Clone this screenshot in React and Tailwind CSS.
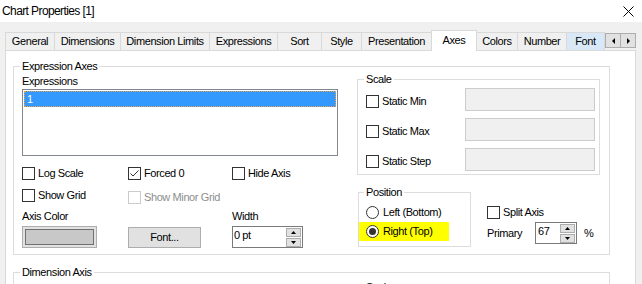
const tabs = [
  { label: 'General', w: 'w-[50px]' },
  { label: 'Dimensions', w: 'w-[67px]' },
  { label: 'Dimension Limits', w: 'w-[90px]' },
  { label: 'Expressions', w: 'w-[69px]' },
  { label: 'Sort', w: 'w-[45px]' },
  { label: 'Style', w: 'w-[41px]' },
  { label: 'Presentation', w: 'w-[71px]' },
  { label: 'Axes', w: 'w-[46px]', active: true },
  { label: 'Colors', w: 'w-[42px]' },
  { label: 'Number', w: 'w-[50px]' },
  { label: 'Font', w: 'w-[39px]', hover: true },
]

function Tab({ tab }) {
  if (tab.active) {
    return (
      <div className={`${tab.w} h-[21px] -mb-px -mr-px relative z-10 bg-white border border-b-0 border-[#d9d9d9] flex justify-center pt-[3px]`}>
        {tab.label}
      </div>
    )
  }
  return (
    <div
      className={`${tab.w} h-[18px] -mr-px border border-b-0 border-[#d9d9d9] flex items-center justify-center ${
        tab.hover ? 'bg-[#d9e8f7]' : 'bg-[#f0f0f0]'
      }`}
    >
      {tab.label}
    </div>
  )
}

function CheckBox({ label, checked = false, disabled = false, className = '' }) {
  return (
    <div className={`flex items-center h-[13px] ${className}`}>
      <span
        className={`w-[13px] h-[13px] shrink-0 bg-white border flex items-center justify-center ${
          disabled ? 'border-[#cccccc]' : 'border-[#333333]'
        }`}
      >
        {checked && (
          <svg width="11" height="11" viewBox="0 0 11 11">
            <path d="M1.5 5.5 L4 8 L9.5 2.5" fill="none" stroke="#333333" strokeWidth="1" />
          </svg>
        )}
      </span>
      <span className={`ml-[3px] whitespace-nowrap ${disabled ? 'text-[#8d8d8d]' : ''}`}>{label}</span>
    </div>
  )
}

function Radio({ label, checked = false }) {
  return (
    <div className="flex items-center">
      <span className="w-[13px] h-[13px] shrink-0 rounded-full border border-[#333333] bg-white flex items-center justify-center">
        {checked && <span className="w-[7px] h-[7px] rounded-full bg-[#333333]" />}
      </span>
      <span className="ml-[4px] whitespace-nowrap">{label}</span>
    </div>
  )
}

function GroupBox({ title, className = '', legendClass = '', children }) {
  return (
    <fieldset className={`border border-[#dcdcdc] min-w-0 ${className}`}>
      <legend className={`px-[2px] leading-[12px] ${legendClass}`}>{title}</legend>
      {children}
    </fieldset>
  )
}

function Arrow({ up }) {
  return (
    <span className="w-[15px] h-[9px] border border-[#adadad] bg-[#e1e1e1] flex items-center justify-center">
      <svg width="5" height="3" viewBox="0 0 5 3">
        <path d={up ? 'M0 3 L2.5 0 L5 3Z' : 'M0 0 L2.5 3 L5 0Z'} fill="#000" />
      </svg>
    </span>
  )
}

function Spin({ value, className = '', textClass = '' }) {
  return (
    <div className={`flex h-[22px] border border-[#7a7a7a] bg-white ${className}`}>
      <span className={`flex-1 pt-[2px] ${textClass}`}>{value}</span>
      <div className="flex flex-col justify-center gap-[1px] pr-[1px]">
        <Arrow up />
        <Arrow />
      </div>
    </div>
  )
}

function ScaleRow({ label }) {
  return (
    <div className="h-[23px] flex items-center justify-between">
      <CheckBox label={label} className="mt-[4px]" />
      <div className="w-[130px] h-[23px] bg-[#f0f0f0] border border-[#cccccc]" />
    </div>
  )
}

export default function App() {
  return (
    <div className="w-[642px] h-[284px] overflow-hidden bg-[#f0f0f0] text-black text-[11px] leading-[13px] tracking-[-0.4px] font-['Liberation_Sans',Arial,sans-serif]">
      {/* title bar */}
      <div className="h-[22px] bg-white flex items-center justify-between pl-[2px] pr-[8px]">
        <span className="text-[12px] leading-[14px] tracking-[-0.6px]">Chart Properties [1]</span>
        <svg width="11" height="11" viewBox="0 0 11 11">
          <path d="M0.5 0.5 L10.5 10.5 M10.5 0.5 L0.5 10.5" stroke="#000" strokeWidth="1" />
        </svg>
      </div>

      {/* tab strip */}
      <div className="mt-[8px] h-[20px] flex items-end pl-[5px] pr-[6px]">
        {tabs.map((t) => (
          <Tab key={t.label} tab={t} />
        ))}
        <div className="ml-auto mb-[2px] flex">
          <span className="w-[16px] h-[15px] border border-[#adadad] bg-[#e1e1e1] flex items-center justify-center">
            <svg width="3" height="6" viewBox="0 0 3 6">
              <path d="M3 0 L0 3 L3 6Z" fill="#000" />
            </svg>
          </span>
          <span className="w-[16px] h-[15px] -ml-px border border-[#adadad] bg-[#e1e1e1] flex items-center justify-center">
            <svg width="3" height="6" viewBox="0 0 3 6">
              <path d="M0 0 L3 3 L0 6Z" fill="#000" />
            </svg>
          </span>
        </div>
      </div>

      {/* tab page */}
      <div className="ml-[5px] w-[631px] h-[240px] bg-white border border-[#d9d9d9]">
        <GroupBox title="Expression Axes" className="ml-[7px] mt-[9px] w-[597px]" legendClass="ml-[6px]">
          <div className="flex pl-[8px] pb-[6px]">
            {/* left column */}
            <div className="w-[316px]">
              <div className="mt-[3px]">Expressions</div>
              <div className="mt-[1px] h-[67px] border border-[#828790] p-[1px]">
                <div className="h-[16px] bg-[#3399ff] border border-dotted border-[#f0a040] text-white pl-[2px] flex items-center">
                  1
                </div>
              </div>

              <div className="mt-[11px] grid grid-cols-[106px_104px_1fr]">
                <CheckBox label="Log Scale" />
                <CheckBox label="Forced 0" checked />
                <CheckBox label="Hide Axis" />
              </div>
              <div className="mt-[9px] grid grid-cols-[106px_104px_1fr]">
                <CheckBox label="Show Grid" />
                <CheckBox label="Show Minor Grid" disabled className="mt-[2px]" />
                <div />
              </div>
              <div className="mt-[6px] grid grid-cols-[106px_104px_1fr]">
                <span>Axis Color</span>
                <span />
                <span>Width</span>
              </div>
              <div className="mt-[3px] grid grid-cols-[106px_104px_1fr] items-start">
                <div className="w-[75px] h-[22px] border border-[#adadad] bg-[#e1e1e1] p-[2px]">
                  <div className="w-full h-full border border-[#707070] bg-[#c8c8c8]" />
                </div>
                <div className="mt-[1px] w-[73px] h-[21px] border border-[#adadad] bg-[#e1e1e1] flex items-center justify-center">
                  Font...
                </div>
                <Spin value="0 pt" className="w-[71px]" textClass="pl-[1px]" />
              </div>
            </div>

            {/* right column */}
            <div className="ml-[19px] w-[243px]">
              <GroupBox title="Scale" className="mt-[1px] w-[243px]" legendClass="ml-[6px]">
                <div className="mt-[3px] pl-[8px] pr-[4px] pb-[3px] flex flex-col gap-[7px]">
                  <ScaleRow label="Static Min" />
                  <ScaleRow label="Static Max" />
                  <ScaleRow label="Static Step" />
                </div>
              </GroupBox>

              <div className="mt-[11px] flex">
                <GroupBox title="Position" className="ml-[1px] w-[113px]" legendClass="ml-[5px]">
                  <div className="mt-[5px] pb-[5px]">
                    <div className="h-[19px] pl-[7px] flex items-center">
                      <Radio label="Left (Bottom)" />
                    </div>
                    <div className="w-[90px] h-[19px] pl-[7px] bg-[#ffff00] flex items-center">
                      <Radio label="Right (Top)" checked />
                    </div>
                  </div>
                </GroupBox>
                <div className="ml-[16px] mt-[17px]">
                  <div className="h-[19px] flex items-center">
                    <CheckBox label="Split Axis" />
                  </div>
                  <div className="h-[22px] flex items-center">
                    <span className="w-[48px]">Primary</span>
                    <Spin value="67" className="w-[42px]" textClass="pl-[2px]" />
                    <span className="ml-[7px]">%</span>
                  </div>
                </div>
              </div>
            </div>
          </div>
        </GroupBox>

        <GroupBox title="Dimension Axis" className="ml-[7px] mt-[11px] w-[597px]" legendClass="ml-[6px]">
          <div className="flex pl-[8px] pb-[6px]">
            <div className="w-[316px]" />
            <div className="ml-[19px] w-[243px]">
              <GroupBox title="Scale" className="mt-[3px] w-[243px] h-[60px]" legendClass="ml-[6px]" />
            </div>
          </div>
        </GroupBox>
      </div>
    </div>
  )
}
